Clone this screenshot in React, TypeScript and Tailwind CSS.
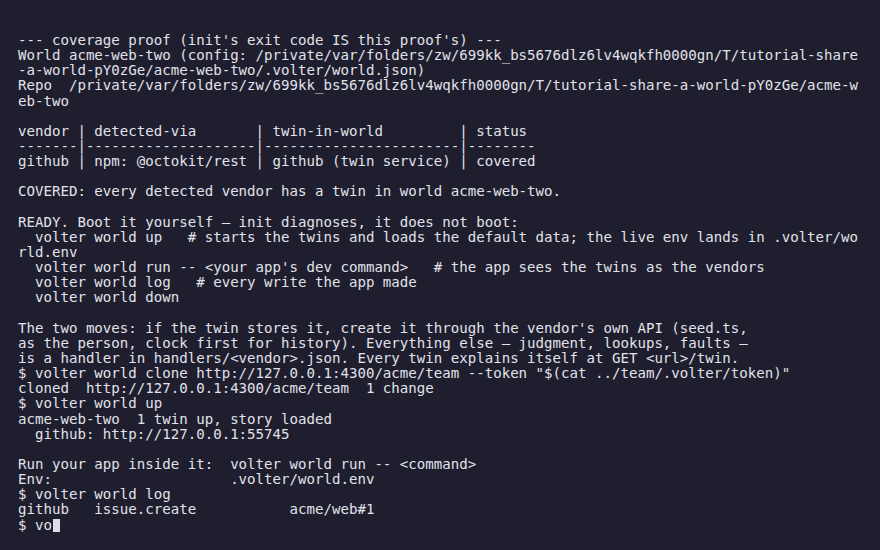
const LINES: string[] = [
  "--- coverage proof (init's exit code IS this proof's) ---",
  "World acme-web-two (config: /private/var/folders/zw/699kk_bs5676dlz6lv4wqkfh0000gn/T/tutorial-share",
  "-a-world-pY0zGe/acme-web-two/.volter/world.json)",
  "Repo  /private/var/folders/zw/699kk_bs5676dlz6lv4wqkfh0000gn/T/tutorial-share-a-world-pY0zGe/acme-w",
  "eb-two",
  "",
  "vendor | detected-via       | twin-in-world         | status",
  "-------|--------------------|-----------------------|--------",
  "github | npm: @octokit/rest | github (twin service) | covered",
  "",
  "COVERED: every detected vendor has a twin in world acme-web-two.",
  "",
  "READY. Boot it yourself \u2014 init diagnoses, it does not boot:",
  "  volter world up   # starts the twins and loads the default data; the live env lands in .volter/wo",
  "rld.env",
  "  volter world run -- <your app's dev command>   # the app sees the twins as the vendors",
  "  volter world log   # every write the app made",
  "  volter world down",
  "",
  "The two moves: if the twin stores it, create it through the vendor's own API (seed.ts,",
  "as the person, clock first for history). Everything else \u2014 judgment, lookups, faults \u2014",
  "is a handler in handlers/<vendor>.json. Every twin explains itself at GET <url>/twin.",
  '$ volter world clone http://127.0.0.1:4300/acme/team --token "$(cat ../team/.volter/token)"',
  "cloned  http://127.0.0.1:4300/acme/team  1 change",
  "$ volter world up",
  "acme-web-two  1 twin up, story loaded",
  "  github: http://127.0.0.1:55745",
  "",
  "Run your app inside it:  volter world run -- <command>",
  "Env:                     .volter/world.env",
  "$ volter world log",
  "github   issue.create           acme/web#1",
];

export default function App() {
  return (
    <div className="h-[550px] w-[880px] overflow-hidden bg-[#1e1e2e] pl-[18px] pt-[33px]">
      <pre className="whitespace-pre font-['DejaVu_Sans_Mono',monospace] text-[14.1px] leading-[15.15px] text-[#e2e2ea]">
        {LINES.map((l, i) => (
          <div key={i} className="h-[15.15px]">
            {l}
          </div>
        ))}
        <div className="flex h-[15.15px] items-center">
          <span>$ vo</span>
          <span className="ml-px h-[13px] w-[7px] bg-[#dcdcea]" />
        </div>
      </pre>
    </div>
  );
}
